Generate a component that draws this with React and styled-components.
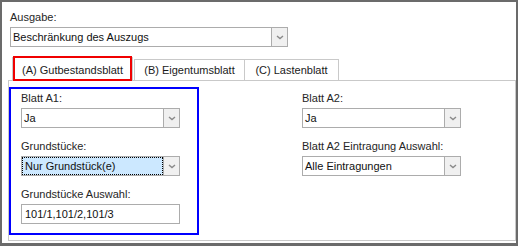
import React from 'react';
import styled, { createGlobalStyle, css } from 'styled-components';

const GlobalStyle = createGlobalStyle`
  html, body { margin: 0; padding: 0; background: #fff; }
  body {
    font-family: "Liberation Sans", Arial, sans-serif;
    font-size: 11px;
    color: #1a1a1a;
  }
  * { box-sizing: border-box; }
`;

const Frame = styled.div`
  width: 518px;
  height: 246px;
  border: 2px solid #6b6b6b;
  border-bottom-width: 3px;
  padding-top: 8px;
  display: flex;
  flex-direction: column;
  background: #fff;
`;

const TopField = styled.div`
  padding-left: 8px;
  display: flex;
  flex-direction: column;
`;

const Field = styled.div`
  display: flex;
  flex-direction: column;
  margin-bottom: ${p => p.$mb ?? 11}px;
`;

const Label = styled.div`
  height: 14px;
  line-height: 14px;
  margin-bottom: 3px;
  white-space: nowrap;
  color: #262626;
`;

const Combo = styled.div`
  width: ${p => p.$w}px;
  height: 20px;
  border: 1px solid #acacac;
  display: flex;
  background: #fff;
`;

const ComboText = styled.div`
  flex: 1;
  display: flex;
  align-items: center;
  padding-left: 2px;
  white-space: nowrap;
  color: #111;
  ${p => p.$focused && css`
    background: #cce8ff;
    border: 1px dotted #000;
    padding-left: 2px;
  `}
`;

const ComboButton = styled.div`
  width: 16px;
  border-left: 1px solid #acacac;
  background: #f0f0f0;
  display: flex;
  align-items: center;
  justify-content: center;
`;

const TextBox = styled.div`
  width: ${p => p.$w}px;
  height: 20px;
  border: 1px solid #acacac;
  display: flex;
  align-items: center;
  padding-left: 3px;
  color: #111;
  white-space: nowrap;
`;

const TabStrip = styled.div`
  display: flex;
  align-items: flex-end;
  margin-top: 10px;
  padding-left: 10px;
  height: 24px;
  margin-bottom: -1px;
  position: relative;
  z-index: 1;
`;

const Tab = styled.div`
  position: relative;
  width: ${p => p.$w}px;
  height: ${p => (p.$active ? 24 : 21)}px;
  margin-bottom: ${p => (p.$active ? 0 : 1)}px;
  margin-left: ${p => p.$ml ?? 0}px;
  border: 1px solid #c9c9c9;
  border-bottom: none;
  background: #fff;
  display: flex;
  align-items: center;
  justify-content: center;
  white-space: nowrap;
  color: #1a1a1a;
  padding-top: ${p => (p.$active ? 1 : 0)}px;
`;

const Highlight = styled.span`
  position: absolute;
  left: 0;
  right: 0;
  top: -2px;
  bottom: 0;
  border: 2px solid #f00000;
  pointer-events: none;
`;

const Panel = styled.div`
  margin-left: 6px;
  height: 161px;
  border: 1px solid #c9c9c9;
  padding-top: 6px;
  display: flex;
  align-items: flex-start;
`;

const Group = styled.div`
  width: 190px;
  height: 148px;
  border: 2px solid #0000ff;
  padding: 2px 0 0 10px;
  display: flex;
  flex-direction: column;
`;

const Column = styled.div`
  margin-left: 103px;
  padding-top: 4px;
  display: flex;
  flex-direction: column;
`;

const Chevron = () => (
  <svg width="8" height="5" viewBox="0 0 8 5">
    <path d="M1 1 L4 3.6 L7 1" fill="none" stroke="#8a8a8a" strokeWidth="1.4" />
  </svg>
);

const ComboBox = ({ w, value, focused }) => (
  <Combo $w={w}>
    <ComboText $focused={focused}>{value}</ComboText>
    <ComboButton>
      <Chevron />
    </ComboButton>
  </Combo>
);

export default function App() {
  return (
    <>
      <GlobalStyle />
      <Frame>
        <TopField>
          <Label>Ausgabe:</Label>
          <ComboBox w={278} value="Beschränkung des Auszugs" />
        </TopField>
        <TabStrip>
          <Tab $active $w={121}>
            (A) Gutbestandsblatt
            <Highlight />
          </Tab>
          <Tab $w={111} $ml={1}>(B) Eigentumsblatt</Tab>
          <Tab $w={95} $ml={-1}>(C) Lastenblatt</Tab>
        </TabStrip>
        <Panel>
          <Group>
            <Field>
              <Label>Blatt A1:</Label>
              <ComboBox w={159} value="Ja" />
            </Field>
            <Field>
              <Label>Grundstücke:</Label>
              <ComboBox w={159} value="Nur Grundstück(e)" focused />
            </Field>
            <Field $mb={0}>
              <Label>Grundstücke Auswahl:</Label>
              <TextBox $w={159}>101/1,101/2,101/3</TextBox>
            </Field>
          </Group>
          <Column>
            <Field>
              <Label>Blatt A2:</Label>
              <ComboBox w={159} value="Ja" />
            </Field>
            <Field>
              <Label>Blatt A2 Eintragung Auswahl:</Label>
              <ComboBox w={159} value="Alle Eintragungen" />
            </Field>
          </Column>
        </Panel>
      </Frame>
    </>
  );
}
